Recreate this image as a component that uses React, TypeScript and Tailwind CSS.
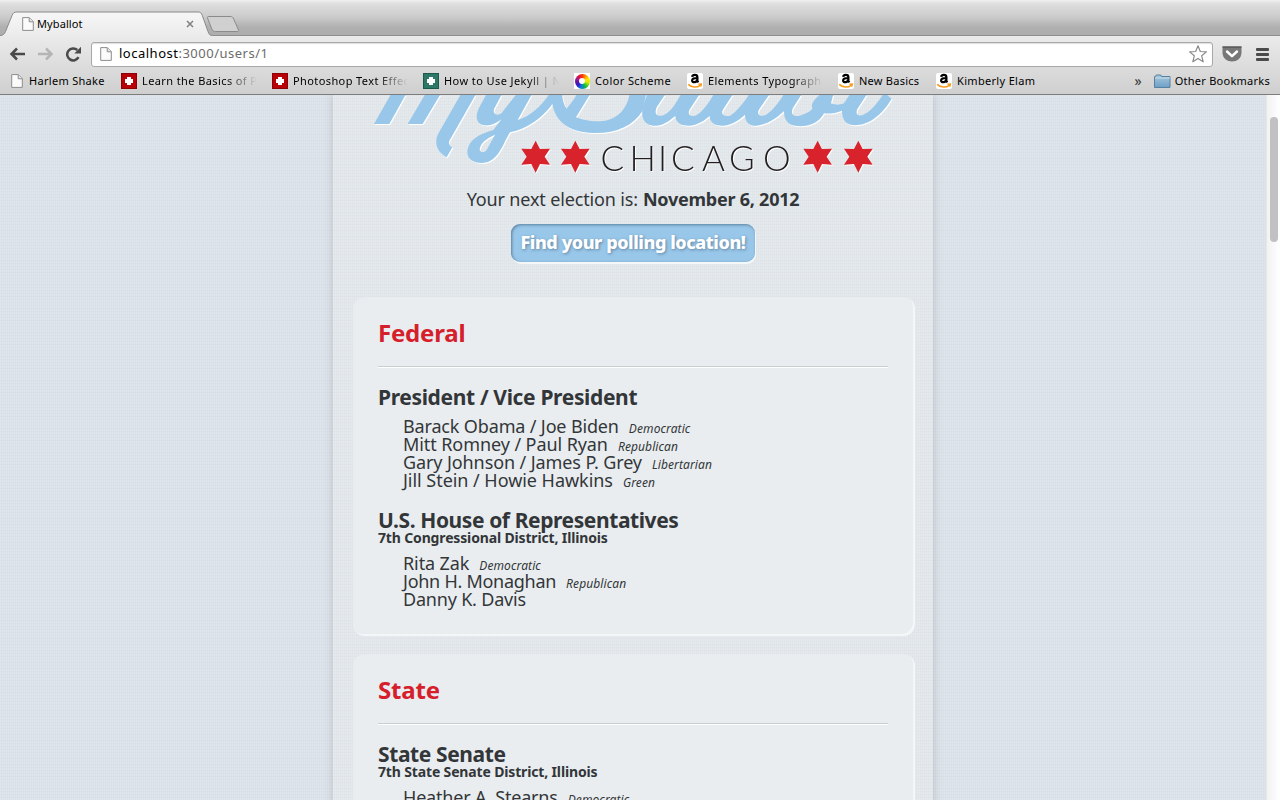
import React from "react";

const ui = "font-['Noto_Sans','Liberation_Sans',sans-serif]";
const weave =
  "bg-[repeating-linear-gradient(90deg,rgba(255,255,255,.14)_0px_1px,transparent_1px_2px),repeating-linear-gradient(rgba(120,135,150,.035)_0px_1px,transparent_1px_3px)]";

function PageIcon({ className = "" }: { className?: string }) {
  return (
    <svg viewBox="0 0 12 14" className={"h-[14px] w-[12px] shrink-0 " + className}>
      <path d="M.7.6h6.6l4 4v8.8H.7z" fill="#fbfbfb" stroke="#8d8d8d" />
      <path d="M7.2.8v4h4" fill="#e4e4e4" stroke="#8d8d8d" />
    </svg>
  );
}

function PlusIcon({ className }: { className: string }) {
  return (
    <div className={"flex size-4 shrink-0 items-center justify-center border " + className}>
      <svg viewBox="0 0 8 8" className="size-[8px]">
        <path d="M2 0h4v2h2v4H6v2H2V6H0V2h2z" fill="#fff" />
      </svg>
    </div>
  );
}

function WheelIcon() {
  return (
    <div className="flex size-4 shrink-0 items-center justify-center bg-white">
      <div className="flex size-[15px] items-center justify-center rounded-full bg-[conic-gradient(#ff3b00,#ff9a00,#ffe600,#d8ee00,#4ccf1e,#00a86b,#1277e8,#2b1fc4,#5b12a8,#a01890,#e01040,#ff3b00)]">
        <div className="size-[6px] rounded-full bg-white" />
      </div>
    </div>
  );
}

function AmazonIcon() {
  return (
    <svg viewBox="0 0 16 16" className="size-4 shrink-0">
      <rect width="16" height="16" rx="2" fill="#fff" />
      <path d="M5.200 3.800C5.400 2.400 6.500 1.900 7.800 1.900c1.800 0 2.600.8 2.600 2.300v4l1 1.200M10.200 5C7 5 5.100 5.700 5.100 7.500c0 2.500 4.100 2.200 5-.4" fill="none" stroke="#000" strokeWidth="2.200" />
      <path d="M1.200 11.400c3.500 3.400 8.800 3.400 12 1M11.500 11.200l2.800-.2-.5 2.600" fill="none" stroke="#f79b1c" strokeWidth="1.500" />
    </svg>
  );
}

function FolderIcon() {
  return (
    <svg viewBox="0 0 17 15" className="h-[15px] w-[17px] shrink-0">
      <defs>
        <linearGradient id="folder" x2="0" y2="1">
          <stop stopColor="#a9c9df" />
          <stop offset="1" stopColor="#6c9fc5" />
        </linearGradient>
      </defs>
      <path d="M.5 13.500V2.500h1l.7-1.500h4.600l.7 1.500h8.500v11z" fill="url(#folder)" stroke="#56809f" />
      <path d="M1 4h15" stroke="#c6dcea" />
    </svg>
  );
}

const fade = "[mask-image:linear-gradient(90deg,#000_72%,transparent_99%)]";

const bookmarks: { label: string; icon: React.ReactNode; box: string; text: string }[] = [
  { label: "Harlem Shake", icon: <PageIcon />, box: "w-[110px] gap-[6px]", text: "tracking-[0.3px]" },
  { label: "Learn the Basics of P", icon: <PlusIcon className="border-[#8e0006] bg-[#b80008]" />, box: "w-[151px] gap-[5px]", text: "w-[116px] tracking-[0.4px] " + fade },
  { label: "Photoshop Text Effec", icon: <PlusIcon className="border-[#8e0006] bg-[#b80008]" />, box: "w-[151px] gap-[5px]", text: "w-[116px] tracking-[0.4px] " + fade },
  { label: "How to Use Jekyll | N", icon: <PlusIcon className="border-[#1d5a4c] bg-[#2d7767]" />, box: "w-[151px] gap-[5px]", text: "w-[116px] tracking-[0.42px] " + fade },
  { label: "Color Scheme", icon: <WheelIcon />, box: "w-[113px] gap-[5px]", text: "tracking-[0.4px]" },
  { label: "Elements Typograph", icon: <AmazonIcon />, box: "w-[151px] gap-[5px]", text: "w-[116px] tracking-[0.4px] " + fade },
  { label: "New Basics", icon: <AmazonIcon />, box: "w-[98px] gap-[5px]", text: "tracking-[0.25px]" },
  { label: "Kimberly Elam", icon: <AmazonIcon />, box: "w-[110px] gap-[5px]", text: "tracking-[0.32px]" },
];

function BrowserChrome() {
  return (
    <header className={"flex h-[95px] shrink-0 flex-col border-b border-[#7d7d7d] text-[11px] text-black " + ui}>
      <div className="relative flex h-[36px] items-end bg-[linear-gradient(#f0f0f0_0px,#dedede_4px,#c9c9c9_18px,#b0b0b0_27px,#adadad_35px)]">
        <svg viewBox="0 0 250 36" className="absolute left-0 top-0 h-[36px] w-[250px]">
          <defs>
            <linearGradient id="tab" x2="0" y2="1">
              <stop stopColor="#f7f7f7" />
              <stop offset="1" stopColor="#ebebeb" />
            </linearGradient>
          </defs>
          <path d="M0 35.500h250" stroke="#8f8f8f" />
          <path d="M0 35.500c3 0 4.500-1.500 5.500-4l6.500-16c1-2.500 2-3.500 5-3.500h181c2.500 0 3.500 1 4.300 3.500l5.700 16c1 2.500 1.500 4 4.500 4l0 1H0z" fill="url(#tab)" />
          <path d="M0 35.500c3 0 4.500-1.500 5.500-4l6.500-16c1-2.500 2-3.500 5-3.500h181c2.500 0 3.500 1 4.300 3.500l5.700 16c1 2.500 1.500 4 4.500 4" fill="none" stroke="#8a8a8a" />
          <path d="M209 16.500h21c2 0 3 .5 3.700 2.500l4.800 11c.4 1-.2 1.500-1.500 1.500h-21.500c-2 0-3-.8-3.700-2.500l-4.300-11c-.4-1 .1-1.500 1.500-1.500z" fill="#d0d0d0" stroke="#8b8b8b" />
        </svg>
        <div className="relative flex h-[24px] w-[204px] items-center pl-[22px]">
          <PageIcon />
          <span className="ml-[3px] tracking-[0.1px]">Myballot</span>
          <svg viewBox="0 0 8 8" className="ml-auto mr-[10px] size-[8px]">
            <path d="M1 1l6 6M7 1L1 7" stroke="#808080" strokeWidth="1.500" />
          </svg>
        </div>
        <div className="absolute right-0 top-[35px] h-px w-[1035px] bg-[#8f8f8f]" />
      </div>
      <div className="flex grow flex-col bg-linear-to-b from-[#ebebeb] to-[#cfcfcf]">
        <div className="flex h-[35px] items-center pl-[9px] pt-px">
          <svg viewBox="0 0 18 14" className="h-[14px] w-[18px]">
            <path d="M16 7H3M8 1.500L2.500 7 8 12.500" fill="none" stroke="#4a4a4a" strokeWidth="2.500" />
          </svg>
          <svg viewBox="0 0 18 14" className="ml-[10px] h-[14px] w-[18px]">
            <path d="M1 7h13M9 1.500L14.500 7 9 12.500" fill="none" stroke="#b5b5b5" strokeWidth="2.500" />
          </svg>
          <svg viewBox="0 0 17 16" className="ml-[10px] h-[16px] w-[17px]">
            <path d="M13.500 11.200A6 6 0 1 1 12.300 4" fill="none" stroke="#4a4a4a" strokeWidth="2.500" />
            <path d="M16 .8v6.700H9.300z" fill="#4a4a4a" />
          </svg>
          <div className="ml-[9px] flex h-[25px] w-[1122px] items-center rounded-[3px] border border-[#a9a9a9] bg-white pl-[8px] pr-[4px] shadow-[inset_0_1px_1px_#ddd]">
            <PageIcon />
            <span className="ml-[7px] text-[13px] tracking-[0.5px] text-[#6c6c6c]">
              <span className="text-black">localhost</span>:3000/users/1
            </span>
            <svg viewBox="0 0 20 20" className="ml-auto size-[20px]">
              <path d="M10 1.800l2.300 5.700 6.100.4-4.700 3.900 1.500 6L10 14.500l-5.200 3.300 1.500-6L1.600 7.900l6.100-.4z" fill="#fff" stroke="#8a8a8a" strokeWidth="1.200" strokeLinejoin="round" />
            </svg>
          </div>
          <svg viewBox="0 0 20 18" className="ml-[9px] h-[18px] w-[20px]">
            <path d="M.5 1.500h19v6c0 12-19 12-19 0z" fill="#777" />
            <path d="M.5 2h19" stroke="#444" />
            <path d="M5 6.500l5 4.700 5-4.700" fill="none" stroke="#fff" strokeWidth="2.500" strokeLinecap="round" strokeLinejoin="round" />
          </svg>
          <div className="ml-[14px] flex flex-col gap-[2px]">
            <div className="h-[3px] w-[13px] rounded-[1px] bg-[#4b4b4b]" />
            <div className="h-[3px] w-[13px] rounded-[1px] bg-[#4b4b4b]" />
            <div className="h-[3px] w-[13px] rounded-[1px] bg-[#4b4b4b]" />
          </div>
        </div>
        <div className="flex h-[20px] items-center pl-[11px] pr-[10px]">
          {bookmarks.map((b) => (
            <div key={b.label} className={"flex shrink-0 items-center " + b.box}>
              {b.icon}
              <span className={"overflow-hidden whitespace-nowrap " + b.text}>{b.label}</span>
            </div>
          ))}
          <span className="ml-auto mr-[12px] text-[14px] leading-[16px] text-[#333]">»</span>
          <FolderIcon />
          <span className="ml-[4px] tracking-[0.26px]">Other Bookmarks</span>
        </div>
      </div>
    </header>
  );
}

const star = "M0-48L13-23 43-24 27 0 43 24 13 22 0 48-13 22-43 24-27 0-43-24-13-23z";

function Logo() {
  return (
    <svg viewBox="333 95 600 85" className="h-[85px] w-[600px] shrink-0 drop-shadow-[1px_1px_0_#fff]">
      <g transform="translate(360 90) scale(.33333)" fill="#99c7e9">
        <path d="M42 102L97 5h45L88 102zM143 102L200 5h46L188 102zM307 5L238 125C222 150 225 182 260 202L277 172C262 162 266 154 275 140L352 5z" />
        <g transform="translate(330 12)">
          <path
            fillRule="evenodd"
            d="M53-7L27 42C15 66 18 90 42 94 62 96 78 88 95 75L70 108C30 120-5 135-8 175-8 195 10 208 38 207 85 205 98 150 120 115 170 105 220 70 247 30 260 100 320 117 378 117 440 117 490 95 518 50L530-7H480C470 65 420 82 385 82 355 82 335 77 318 70L365-7H325C310 20 300 32 290 44 280 30 277 15 276-7H243C215 35 185 65 143 78L190-7H145L95 57C82 68 68 60 72 45L100-7zM75 122C45 135 30 150 29 168 35 178 45 175 50 168z"
          />
        </g>
        <g transform="translate(810 12)">
          <path
            fillRule="evenodd"
            d="M55-7C35 40 35 55 38 68 42 90 60 96 80 95 105 93 120 78 136 66 138 92 160 96 180 95 205 93 225 78 239 66 240 92 262 96 280 95 310 93 330 75 345 62 345 90 365 97 380 95 420 90 440 70 462 52 462 85 480 97 512 97 560 95 575 70 582 58 600 60 618 57 636 50 636 85 655 98 690 92 735 85 770 40 785 14L760-7zM111-7L80 40C72 60 80 68 95 65 120 60 140 25 157-7zM214-7L180 45C170 62 182 68 195 65 215 60 245 15 255-7zM314-7L280 45C270 62 282 68 300 65 320 55 350 15 362-7zM424-7L388 45C378 62 390 68 405 64 425 55 455 15 465-7zM520-7L490 40C480 60 490 68 505 66 530 60 552 48 546 38 543 25 560 10 580-7zM612-7L603 28C620 35 632 32 642 28L665-7zM716-7L682 45C675 62 685 68 700 62 720 55 750 20 763-7z"
          />
        </g>
        <g fill="#d8232d">
          <path d={star} transform="translate(527 200)" />
          <path d={star} transform="translate(646 200)" />
          <path d={star} transform="translate(1373 200)" />
          <path d={star} transform="translate(1495 200)" />
        </g>
      </g>
      <text x="600.500 629.500 658 671 702 729 763" y="171" className="fill-[#231f20] font-['Lato',sans-serif] text-[35px] font-light">
        CHICAGO
      </text>
    </svg>
  );
}

type Candidate = { name: string; party?: string; track: string };
type Race = { title: string; titleTrack: string; district?: string; candidates: Candidate[] };

const sections: { title: string; races: Race[] }[] = [
  {
    title: "Federal",
    races: [
      {
        title: "President / Vice President",
        titleTrack: "tracking-[-0.35px]",
        candidates: [
          { name: "Barack Obama / Joe Biden", party: "Democratic", track: "tracking-[-0.15px]" },
          { name: "Mitt Romney / Paul Ryan", party: "Republican", track: "tracking-[-0.08px]" },
          { name: "Gary Johnson / James P. Grey", party: "Libertarian", track: "tracking-[-0.1px]" },
          { name: "Jill Stein / Howie Hawkins", party: "Green", track: "tracking-[-0.04px]" },
        ],
      },
      {
        title: "U.S. House of Representatives",
        titleTrack: "tracking-[-0.41px]",
        district: "7th Congressional District, Illinois",
        candidates: [
          { name: "Rita Zak", party: "Democratic", track: "tracking-[-0.1px]" },
          { name: "John H. Monaghan", party: "Republican", track: "tracking-[-0.27px]" },
          { name: "Danny K. Davis", track: "tracking-[-0.2px]" },
        ],
      },
    ],
  },
  {
    title: "State",
    races: [
      {
        title: "State Senate",
        titleTrack: "tracking-[-0.4px]",
        district: "7th State Senate District, Illinois",
        candidates: [{ name: "Heather A. Stearns", party: "Democratic", track: "tracking-[-0.2px]" }],
      },
    ],
  },
];

function RaceBlock({ race }: { race: Race }) {
  return (
    <section className="mb-[21px]">
      <h3 className={"flex h-[21px] items-center whitespace-nowrap text-[21px] font-bold leading-[21px] " + race.titleTrack}>{race.title}</h3>
      {race.district && <p className="h-[14px] text-[14px] font-bold leading-[14px] tracking-[-0.15px]">{race.district}</p>}
      <ul className="mt-[9px] pl-[25px]">
        {race.candidates.map((c) => (
          <li key={c.name} className="flex h-[18px] items-baseline whitespace-nowrap text-[18px] leading-[18px]">
            <span className={c.track}>{c.name}</span>
            {c.party && <span className="ml-[10px] text-[12px] italic tracking-[0.1px]">{c.party}</span>}
          </li>
        ))}
      </ul>
    </section>
  );
}

export default function App() {
  return (
    <div className="flex h-[800px] w-[1280px] flex-col overflow-hidden bg-[#dae1e9]">
      <BrowserChrome />
      <div className={"flex min-h-0 grow " + ui}>
        <main className={"flex grow justify-center overflow-hidden " + weave}>
          <div className={"flex h-[900px] w-[600px] shrink-0 flex-col bg-[#e1e6ea] text-[#333638] shadow-[0_0_8px_rgba(120,120,120,.35)] " + weave}>
            <Logo />
            <p className="mt-[9px] flex h-[20px] items-center justify-center gap-[5px] whitespace-nowrap text-[18px]">
              <span className="tracking-[-0.15px]">Your next election is:</span>
              <strong className="tracking-[-0.24px]">November 6, 2012</strong>
            </p>
            <button className="ml-[178px] mt-[15px] flex h-[38px] w-[244px] shrink-0 items-center justify-center whitespace-nowrap rounded-[9px] bg-[#99c7e9] pb-[2px] text-[18px] font-extrabold tracking-[-0.44px] text-white shadow-[inset_1px_1px_3px_rgba(50,80,110,.6),1px_2px_0_#f5f8fa] [text-shadow:1px_1px_3px_rgba(60,90,120,.6)]">
              Find your polling location!
            </button>
            <div className="mt-[35px] flex flex-col gap-[18px] px-[20px]">
              {sections.map((s) => (
                <article key={s.title} className="flex h-[339px] w-[562px] flex-col rounded-[12px] bg-[#e9edf0] px-[25px] pt-[24px] shadow-[inset_-2px_-2px_0_#f4f7f8]">
                  <h2 className="h-[24px] text-[24px] font-bold leading-[24px] tracking-[-0.2px] text-[#d5202c]">{s.title}</h2>
                  <hr className="mb-[19px] mt-[21px] h-[2px] w-[510px] border-b border-t border-b-white border-t-[#c9ced1]" />
                  {s.races.map((r) => (
                    <RaceBlock key={r.title} race={r} />
                  ))}
                </article>
              ))}
            </div>
          </div>
        </main>
        <div className="flex w-[14px] justify-center border-l border-[#e8e8e8] bg-linear-to-r from-[#f2f2f2] to-white pt-[22px]">
          <div className="h-[125px] w-[8px] rounded-full bg-[#c1c1c1]" />
        </div>
      </div>
    </div>
  );
}
